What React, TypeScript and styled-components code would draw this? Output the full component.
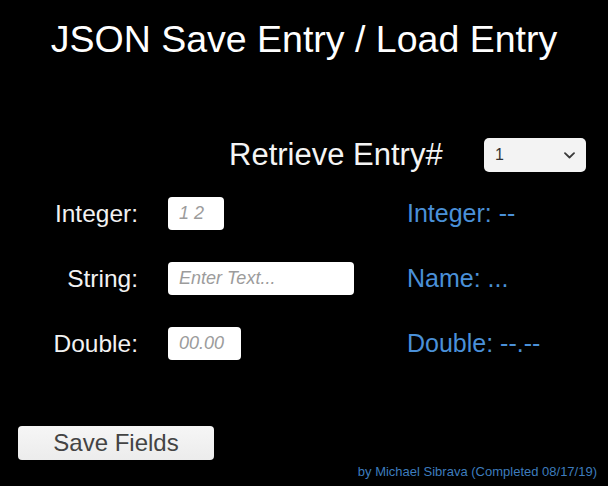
import React from "react";
import styled, { createGlobalStyle } from "styled-components";

const Global = createGlobalStyle`
  html, body { margin: 0; padding: 0; background: #000; }
  body { font-family: "Liberation Sans", Arial, sans-serif; }
`;

const Page = styled.div`
  width: 608px;
  height: 486px;
  background: #000;
  display: flex;
  flex-direction: column;
  overflow: hidden;
  color: #fff;
  font-family: "Liberation Sans", Arial, sans-serif;
`;

const Title = styled.h1`
  margin: 17px 0 0;
  font-size: 37.5px;
  line-height: 44px;
  font-weight: 400;
  text-align: center;
  color: #fff;
`;

const RetrieveRow = styled.div`
  display: flex;
  align-items: center;
  margin-top: 77px;
  padding-left: 229px;
  height: 34px;
`;

const RetrieveLabel = styled.span`
  width: 255px;
  font-size: 31px;
  line-height: 34px;
  color: #f4f4f4;
`;

const Dropdown = styled.div`
  box-sizing: border-box;
  width: 102px;
  height: 34px;
  padding: 0 11px 0 11px;
  display: flex;
  align-items: center;
  justify-content: space-between;
  background: #f3f3f3;
  border-radius: 5px;
  color: #333;
  font-size: 16px;
`;

const FormGrid = styled.div`
  display: grid;
  grid-template-columns: 138px 269px 1fr;
  grid-auto-rows: 33px;
  row-gap: 32px;
  margin-top: 25px;
  align-items: center;
`;

const Label = styled.span`
  text-align: right;
  font-size: 24.5px;
  line-height: 33px;
  color: #f2f2f2;
`;

const InputCell = styled.div`
  padding-left: 30px;
  height: 33px;
  display: flex;
`;

const Field = styled.input<{ $w: number }>`
  box-sizing: border-box;
  width: ${(p) => p.$w}px;
  height: 33px;
  border: none;
  outline: none;
  border-radius: 4px;
  background: #fff;
  padding: 0 0 0 11px;
  margin: 0;
  font-family: "Liberation Sans", Arial, sans-serif;
  font-size: 18px;
  line-height: 33px;
  color: #333;
  &::placeholder {
    color: #9c9c9c;
    font-style: italic;
  }
`;

const Result = styled.span`
  font-size: 25px;
  line-height: 33px;
  color: #4a90d8;
`;

const Footer = styled.div`
  display: flex;
  justify-content: space-between;
  align-items: flex-start;
  margin-top: 66px;
  padding: 0 11px 0 18px;
`;

const SaveButton = styled.button`
  box-sizing: border-box;
  width: 196px;
  height: 34px;
  border: none;
  border-radius: 4px;
  background: linear-gradient(#f6f6f6, #ececec);
  color: #444;
  font-family: "Liberation Sans", Arial, sans-serif;
  font-size: 24px;
  line-height: 34px;
  padding: 0;
  cursor: pointer;
`;

const Credits = styled.span`
  margin-top: 38px;
  font-size: 13px;
  line-height: 15px;
  color: #3d7cbd;
`;

const Chevron = () => (
  <svg width="11" height="7" viewBox="0 0 11 7" fill="none">
    <path d="M1 1.2 L5.5 5.5 L10 1.2" stroke="#3a3a3a" strokeWidth="1.8" strokeLinecap="round" strokeLinejoin="round" />
  </svg>
);

const rows = [
  { label: "Integer:", placeholder: "1 2", width: 56, result: "Integer: --" },
  { label: "String:", placeholder: "Enter Text...", width: 186, result: "Name: ..." },
  { label: "Double:", placeholder: "00.00", width: 73, result: "Double: --.--" },
];

export default function App() {
  return (
    <Page>
      <Global />
      <Title>JSON Save Entry / Load Entry</Title>
      <RetrieveRow>
        <RetrieveLabel>Retrieve Entry#</RetrieveLabel>
        <Dropdown>
          <span>1</span>
          <Chevron />
        </Dropdown>
      </RetrieveRow>
      <FormGrid>
        {rows.map((r) => (
          <React.Fragment key={r.label}>
            <Label>{r.label}</Label>
            <InputCell>
              <Field $w={r.width} placeholder={r.placeholder} />
            </InputCell>
            <Result>{r.result}</Result>
          </React.Fragment>
        ))}
      </FormGrid>
      <Footer>
        <SaveButton>Save Fields</SaveButton>
        <Credits>by Michael Sibrava (Completed 08/17/19)</Credits>
      </Footer>
    </Page>
  );
}
